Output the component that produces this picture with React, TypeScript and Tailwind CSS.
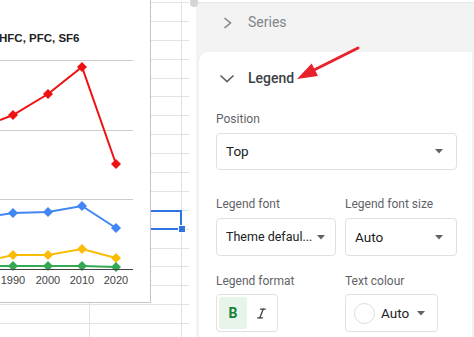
import { Italic } from "lucide-react";

const xs = [13, 48, 82, 116];

const series = [
  { color: "#ee1111", start: 120, ys: [115, 94, 67, 164] },
  { color: "#4285f4", start: 215, ys: [213, 212, 206, 228] },
  { color: "#fbbc04", start: 258, ys: [255, 255, 249, 258] },
  { color: "#34a853", start: 266, ys: [266, 266, 266, 267] },
];

function Diamond({ x, y, color }: { x: number; y: number; color: string }) {
  const r = 5;
  return <polygon points={`${x},${y - r} ${x + r},${y} ${x},${y + r} ${x - r},${y}`} fill={color} />;
}

function Chart() {
  return (
    <div className="absolute left-0 top-0 w-[151px] h-[303px] bg-white border-r border-b border-[#c4c4c4]">
      <svg width="150" height="302" viewBox="0 0 150 302" className="block">
        <text x="-1" y="42" fontSize="11.5" fontWeight="700" fill="#222" fontFamily="'Liberation Sans', Arial, sans-serif">
          HFC, PFC, SF6
        </text>
        {[60, 130, 199].map((y) => (
          <line key={y} x1="0" x2="133" y1={y + 0.5} y2={y + 0.5} stroke="#cccccc" strokeWidth="1" />
        ))}
        {series.map((s) => (
          <g key={s.color}>
            <polyline
              points={[`0,${s.start}`, ...xs.map((x, i) => `${x},${s.ys[i]}`)].join(" ")}
              fill="none"
              stroke={s.color}
              strokeWidth="2"
            />
            {xs.map((x, i) => (
              <Diamond key={x} x={x} y={s.ys[i]} color={s.color} />
            ))}
          </g>
        ))}
        <line x1="0" x2="133" y1="269.5" y2="269.5" stroke="#444" strokeWidth="1" />
        {["1990", "2000", "2010", "2020"].map((t, i) => (
          <text
            key={t}
            x={xs[i]}
            y="284"
            textAnchor="middle"
            fontSize="11"
            fill="#444"
            fontFamily="'Liberation Sans', Arial, sans-serif"
          >
            {t}
          </text>
        ))}
      </svg>
    </div>
  );
}

function Sheet() {
  const rows = Array.from({ length: 18 });
  return (
    <div className="relative w-[189px] h-full overflow-hidden bg-white">
      <div className="h-[3px] border-b border-[#e2e2e2]" />
      {rows.map((_, i) => (
        <div key={i} className="flex h-[18.9px] border-b border-[#e2e2e2]">
          <div className="w-[90px] border-r border-[#e2e2e2]" />
          <div className="w-[92px] border-r border-[#e2e2e2]" />
          <div className="flex-1" />
        </div>
      ))}
      <div className="absolute left-[100px] top-[210px] w-[82px] h-[20px] border-2 border-[#2f74e0]" />
      <div className="absolute left-[179px] top-[226px] w-[6px] h-[6px] bg-[#2f74e0] border border-white box-content -translate-x-[1px] -translate-y-[1px]" />
      <Chart />
    </div>
  );
}

function Caret() {
  return (
    <svg width="8" height="5" viewBox="0 0 8 5" className="shrink-0">
      <path d="M0 0h8L4 4.5z" fill="#5f6368" />
    </svg>
  );
}

function Label({ children }: { children: React.ReactNode }) {
  return <div className="text-[12px] leading-4 text-[#5f6368] whitespace-nowrap">{children}</div>;
}

function Select({ text, className }: { text: string; className: string }) {
  return (
    <div
      className={`flex items-center justify-between rounded-[4px] border border-[#e0e0e0] pl-[9px] text-[#202124] ${className}`}
    >
      <span className="whitespace-nowrap">{text}</span>
      <Caret />
    </div>
  );
}

function Panel() {
  return (
    <div className="relative flex-1 h-full flex flex-col bg-[#f3f3f3] border-t border-[#e6e6e6] mt-[2px]">
      <div className="h-[39px] flex items-center pl-[27px] shrink-0">
        <svg width="10" height="12" viewBox="0 0 10 12" className="shrink-0">
          <path d="M1.5 1l6 5-6 5" fill="none" stroke="#80868b" strokeWidth="1.6" />
        </svg>
        <span className="ml-[15px] text-[14px] text-[#80868b]">Series</span>
      </div>
      <div className="flex-1 mt-[10px] ml-[3px] mr-[2px] bg-white rounded-tl-[8px] shadow-[0_0_1px_rgba(0,0,0,0.12)] pl-[17px]">
        <div className="h-[52px] flex items-center">
          <svg width="16" height="9" viewBox="0 0 16 9" className="ml-[3px] shrink-0">
            <path d="M1.5 1.5l6.5 6 6.5-6" fill="none" stroke="#5f6368" strokeWidth="1.7" />
          </svg>
          <span className="ml-[13px] text-[14px] font-medium text-[#3c4043]">Legend</span>
        </div>

        <div className="pt-[7px]">
          <Label>Position</Label>
        </div>
        <Select text="Top" className="mt-[6px] w-[241px] h-[37px] pr-[13px] text-[13.5px]" />

        <div className="mt-[26px] flex gap-[9px]">
          <div className="w-[120px]">
            <Label>Legend font</Label>
            <Select text="Theme defaul..." className="mt-[6px] h-[38px] pr-[10px] text-[12.5px]" />
          </div>
          <div className="w-[112px]">
            <Label>Legend font size</Label>
            <Select text="Auto" className="mt-[6px] h-[38px] pr-[13px] text-[13.5px]" />
          </div>
        </div>

        <div className="mt-[17px] flex gap-[9px]">
          <div className="w-[120px]">
            <Label>Legend format</Label>
            <div className="mt-[5px] w-[62px] h-[38px] rounded-[4px] border border-[#e0e0e0] flex items-center p-[2px]">
              <div className="w-[28px] h-full rounded-[3px] bg-[#e6f4ea] flex items-center justify-center text-[14px] font-bold text-[#188038]">
                B
              </div>
              <div className="flex-1 flex items-center justify-center">
                <Italic size={13} strokeWidth={2.4} color="#3c4043" />
              </div>
            </div>
          </div>
          <div className="w-[112px]">
            <Label>Text colour</Label>
            <div className="mt-[5px] w-[93px] h-[38px] rounded-[4px] border border-[#e0e0e0] flex items-center pl-[8px] pr-[12px]">
              <div className="w-[21px] h-[21px] rounded-full border border-[#dadce0] bg-white shrink-0" />
              <span className="ml-[6px] text-[13.5px] text-[#202124]">Auto</span>
              <div className="flex-1" />
              <Caret />
            </div>
          </div>
        </div>
      </div>
    </div>
  );
}

export default function App() {
  return (
    <div
      className="relative w-[474px] h-[337px] overflow-hidden flex bg-white"
      style={{ fontFamily: "Roboto, 'Noto Sans', Arial, sans-serif" }}
    >
      <Sheet />
      <div className="w-[7px] h-full bg-white" />
      <Panel />
      <div className="absolute left-[190px] top-[-3px] w-[8px] h-[10px] rounded-full bg-[#d5d5d5]" />
      <svg className="absolute left-0 top-0 pointer-events-none" width="474" height="337">
        <line x1="358" y1="48" x2="310" y2="72" stroke="#e8222a" strokeWidth="3" strokeLinecap="round" />
        <polygon points="297,79 318,76 311.7,63.6" fill="#e8222a" />
      </svg>
    </div>
  );
}
